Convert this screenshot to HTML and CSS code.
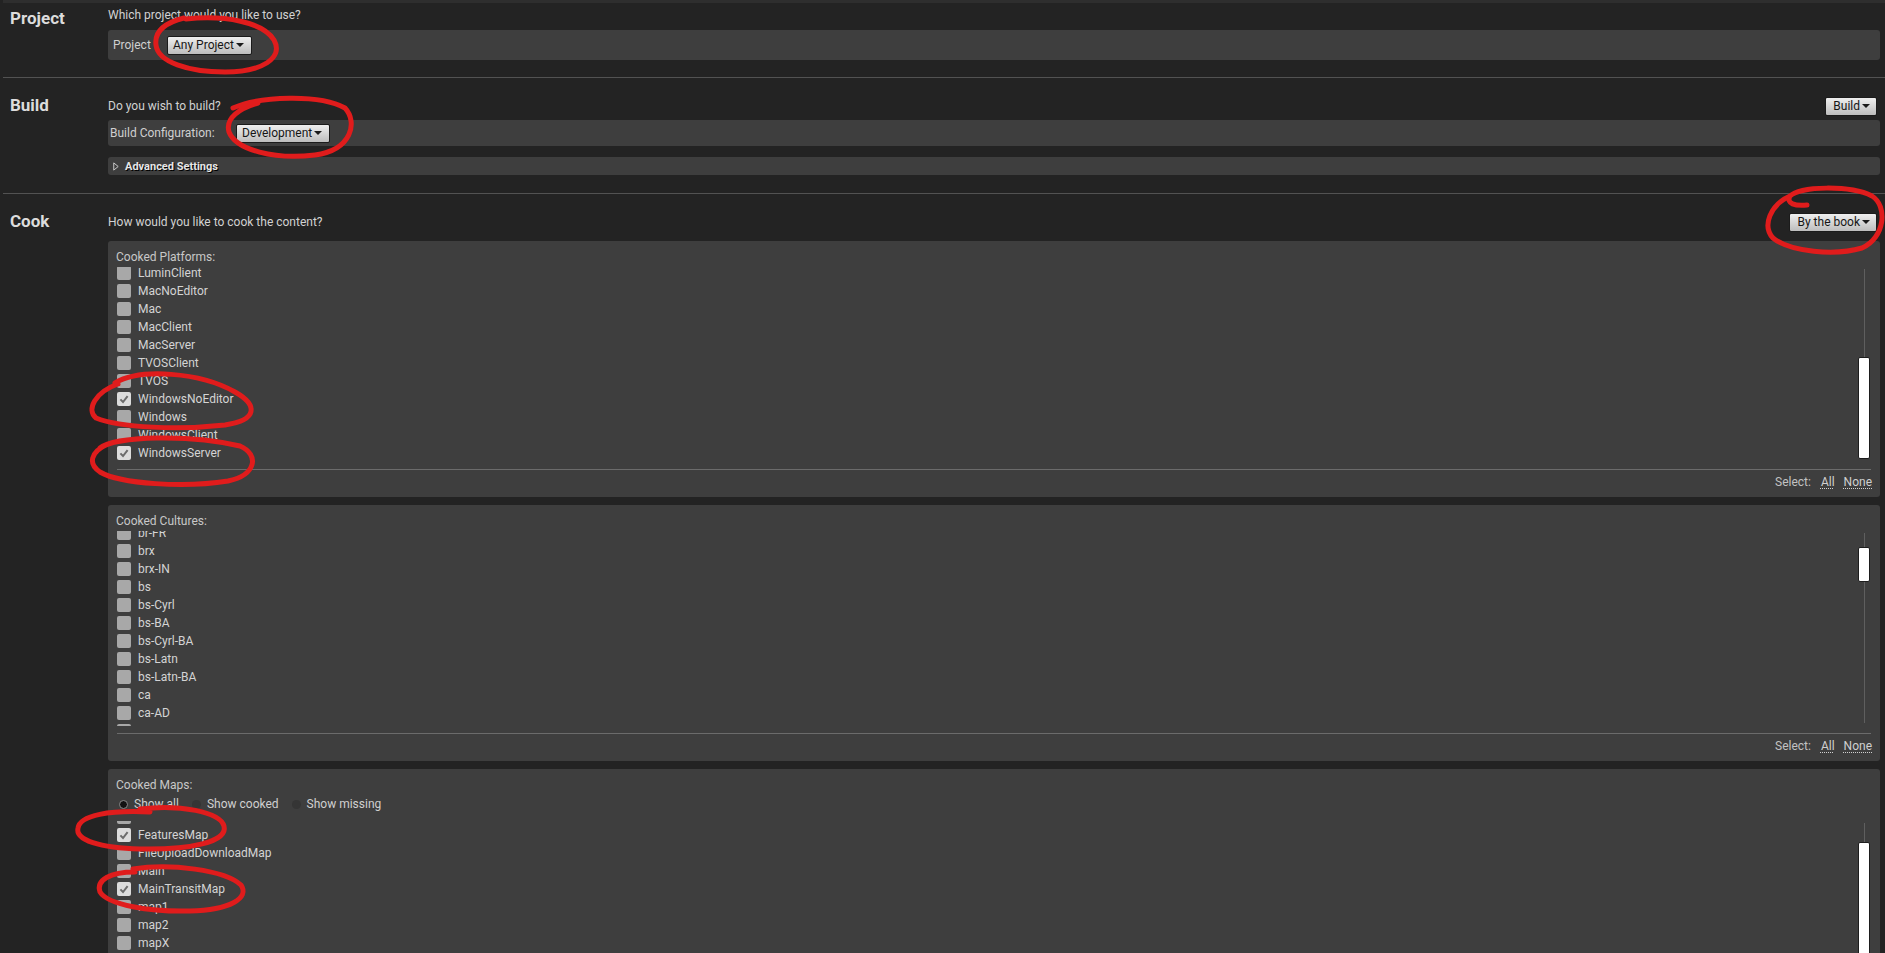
FILE: index.html
```html
<!DOCTYPE html>
<html>
<head>
<meta charset="utf-8">
<title>Project Launcher</title>
<link rel="stylesheet" href="styles.css">
</head>
<body>
<div class="page">
  <div class="topstrip"></div>

  <section class="sec sec-project">
    <h2 class="sec-title title-project">Project</h2>
    <div class="sec-body">
      <div class="sec-head head-project"><span class="q">Which project would you like to use?</span></div>
      <div class="prop-row row-project">
        <span class="prop-label lbl-project">Project</span>
        <span class="combo">Any Project<i class="caret"></i></span>
      </div>
    </div>
  </section>

  <section class="sec sec-build">
    <h2 class="sec-title">Build</h2>
    <div class="sec-body">
      <div class="sec-head">
        <span class="q">Do you wish to build?</span>
        <span class="combo hdr">Build<i class="caret"></i></span>
      </div>
      <div class="prop-row row-build">
        <span class="prop-label lbl-build">Build Configuration:</span>
        <span class="combo">Development<i class="caret"></i></span>
      </div>
      <div class="adv">
        <svg class="adv-tri" width="6" height="9" viewBox="0 0 6 9"><path d="M0.75 0.9 L5.2 4.5 L0.75 8.1 Z" fill="none" stroke="#c8c8c8" stroke-width="1"/></svg>
        <span class="adv-text">Advanced Settings</span>
      </div>
    </div>
  </section>

  <section class="sec sec-cook">
    <h2 class="sec-title">Cook</h2>
    <div class="sec-body">
      <div class="sec-head">
        <span class="q">How would you like to cook the content?</span>
        <span class="combo hdr">By the book<i class="caret"></i></span>
      </div>

      <div class="panel panel-first">
        <div class="panel-label">Cooked Platforms:</div>
        <div class="list-wrap">
          <div class="list">
            <div class="list-inner inner-platforms">
              <div class="item"><span class="cb"></span>LuminClient</div>
              <div class="item"><span class="cb"></span>MacNoEditor</div>
              <div class="item"><span class="cb"></span>Mac</div>
              <div class="item"><span class="cb"></span>MacClient</div>
              <div class="item"><span class="cb"></span>MacServer</div>
              <div class="item"><span class="cb"></span>TVOSClient</div>
              <div class="item"><span class="cb"></span>TVOS</div>
              <div class="item"><span class="cb on"><svg viewBox="0 0 14 14"><path d="M3.4 7.4 L6 10 L10.6 4.2"/></svg></span>WindowsNoEditor</div>
              <div class="item"><span class="cb"></span>Windows</div>
              <div class="item"><span class="cb"></span>WindowsClient</div>
              <div class="item"><span class="cb on"><svg viewBox="0 0 14 14"><path d="M3.4 7.4 L6 10 L10.6 4.2"/></svg></span>WindowsServer</div>
            </div>
          </div>
          <div class="sb"><div class="sb-track"><div class="sb-thumb thumb-platforms"></div></div></div>
        </div>
        <div class="rule"></div>
        <div class="select-row"><span class="sel-label">Select:</span><span class="lnk lnk-all">All</span><span class="lnk lnk-none">None</span></div>
      </div>

      <div class="panel">
        <div class="panel-label">Cooked Cultures:</div>
        <div class="list-wrap wrap-cultures">
          <div class="list">
            <div class="list-inner inner-cultures">
              <div class="item"><span class="cb"></span>br-FR</div>
              <div class="item"><span class="cb"></span>brx</div>
              <div class="item"><span class="cb"></span>brx-IN</div>
              <div class="item"><span class="cb"></span>bs</div>
              <div class="item"><span class="cb"></span>bs-Cyrl</div>
              <div class="item"><span class="cb"></span>bs-BA</div>
              <div class="item"><span class="cb"></span>bs-Cyrl-BA</div>
              <div class="item"><span class="cb"></span>bs-Latn</div>
              <div class="item"><span class="cb"></span>bs-Latn-BA</div>
              <div class="item"><span class="cb"></span>ca</div>
              <div class="item"><span class="cb"></span>ca-AD</div>
              <div class="item"><span class="cb"></span>ca-ES</div>
            </div>
          </div>
          <div class="sb"><div class="sb-track"><div class="sb-thumb thumb-cultures"></div></div></div>
        </div>
        <div class="rule rule-cultures"></div>
        <div class="select-row"><span class="sel-label">Select:</span><span class="lnk lnk-all">All</span><span class="lnk lnk-none">None</span></div>
      </div>

      <div class="panel">
        <div class="panel-label">Cooked Maps:</div>
        <div class="radios">
          <span class="radio"><i class="dot sel"></i>Show all</span>
          <span class="radio"><i class="dot"></i>Show cooked</span>
          <span class="radio"><i class="dot"></i>Show missing</span>
        </div>
        <div class="list-wrap maps-wrap">
          <div class="list">
            <div class="list-inner inner-maps">
              <div class="item"><span class="cb"></span>Default</div>
              <div class="item"><span class="cb on"><svg viewBox="0 0 14 14"><path d="M3.4 7.4 L6 10 L10.6 4.2"/></svg></span>FeaturesMap</div>
              <div class="item"><span class="cb"></span>FileUploadDownloadMap</div>
              <div class="item"><span class="cb"></span>Main</div>
              <div class="item"><span class="cb on"><svg viewBox="0 0 14 14"><path d="M3.4 7.4 L6 10 L10.6 4.2"/></svg></span>MainTransitMap</div>
              <div class="item"><span class="cb"></span>map1</div>
              <div class="item"><span class="cb"></span>map2</div>
              <div class="item"><span class="cb"></span>mapX</div>
              <div class="item"><span class="cb"></span>Minimal</div>
            </div>
          </div>
          <div class="sb"><div class="sb-track track-maps"><div class="sb-thumb thumb-maps"></div></div></div>
        </div>
      </div>
    </div>
  </section>

  <svg class="marks" width="1885" height="953" viewBox="0 0 1885 953">
    <path d="M186 19 C225 15, 263 22, 274 40 C284 58, 262 72, 225 72 C188 72, 158 62, 156 45 C154 30, 168 22, 184 18"/>
    <path d="M233 108 C260 96, 320 94, 345 108 C358 122, 352 150, 315 155 C275 160, 236 150, 229 132 C225 118, 240 108, 258 103"/>
    <path d="M1807 205 C1795 206, 1786 204, 1790 196 C1800 186, 1850 185, 1872 196 C1888 206, 1885 238, 1862 248 C1835 256, 1790 252, 1773 238 C1762 226, 1770 205, 1790 196"/>
    <path d="M115 383 C140 368, 200 372, 235 392 C258 405, 258 420, 225 425 C180 430, 120 428, 96 418 C86 410, 95 392, 118 384"/>
    <path d="M100 448 C115 436, 190 434, 240 446 C260 455, 256 475, 228 481 C185 488, 120 484, 100 472 C88 464, 90 452, 108 444"/>
    <path d="M140 809 C180 804, 220 812, 224 826 C228 842, 190 850, 140 849 C100 848, 75 840, 78 828 C80 815, 110 810, 150 812"/>
    <path d="M133 869 C170 863, 225 870, 241 885 C250 898, 230 910, 190 911 C150 912, 108 905, 100 892 C96 880, 110 872, 135 872"/>
  </svg>
</div>
</body>
</html>
```

FILE: styles.css
```css
html, body {
  margin: 0;
  height: 100%;
  overflow: hidden;
}
body {
  background: #232323;
  font-family: Roboto, "Noto Sans", "Liberation Sans", sans-serif;
  font-size: 12px;
  color: #cecece;
}
.page {
  position: relative;
  width: 1885px;
  height: 953px;
  overflow: hidden;
}
.topstrip {
  height: 3px;
  margin-left: 3px;
  background: #2e2e2e;
}

/* sections */
.sec {
  display: flex;
  margin-left: 3px;
  padding: 18px 5px 18px 0;
  border-bottom: 1px solid #525252;
}
.sec-project {
  padding-top: 5px;
  padding-bottom: 17px;
}
.sec-cook {
  border-bottom: none;
  padding-bottom: 0;
}
.sec-title {
  flex: none;
  width: 105px;
  padding-left: 7px;
  box-sizing: border-box;
  margin: -1px 0 0 0;
  font-size: 17px;
  font-weight: 700;
  line-height: 20px;
  color: #dcdcdc;
}
.title-project {
  margin-top: 0;
}
.sec-body {
  flex: 1;
  min-width: 0;
}
.sec-head {
  display: flex;
  align-items: center;
  justify-content: space-between;
  height: 20px;
}
.head-project {
  height: 14px;
}
.q {
  line-height: 14px;
  color: #d2d2d2;
}

/* property rows */
.prop-row {
  display: flex;
  align-items: center;
  background: #3e3e3e;
  border-radius: 3px;
}
.row-project {
  height: 30px;
  margin-top: 8px;
  padding-left: 5px;
}
.row-build {
  height: 26px;
  margin-top: 4px;
  padding-left: 2px;
}
.prop-label {
  flex: none;
  color: #d0d0d0;
}
.lbl-project {
  width: 54px;
}
.lbl-build {
  width: 126px;
}

/* combo buttons */
.combo {
  display: inline-flex;
  align-items: center;
  height: 19px;
  box-sizing: border-box;
  padding: 0 7px 0 5px;
  border: 1px solid #1b1b1b;
  border-radius: 2px;
  background: linear-gradient(#efefef, #bdbdbd);
  color: #161616;
  font-size: 12px;
  line-height: 17px;
  white-space: nowrap;
}
.combo.hdr {
  padding: 0 6px 0 7px;
  margin-right: 3px;
}
.caret {
  width: 0;
  height: 0;
  margin-left: 2px;
  border-left: 4px solid transparent;
  border-right: 4px solid transparent;
  border-top: 4px solid #1a1a1a;
}

/* advanced settings */
.adv {
  display: flex;
  align-items: center;
  height: 18px;
  margin-top: 11px;
  padding-left: 5px;
  background: #3e3e3e;
  border-radius: 3px;
}
.adv-tri {
  flex: none;
  margin-right: 6px;
}
.adv-text {
  font-size: 11px;
  font-weight: 700;
  color: #e6e6e6;
  text-shadow: 1px 1px 0 #000;
}

/* panels */
.panel {
  margin-top: 8px;
  padding: 9px 9px 7px 8px;
  background: #3e3e3e;
  border-radius: 3px;
}
.panel-first {
  margin-top: 9px;
}
.panel-label {
  height: 15px;
  line-height: 15px;
  color: #c8c8c8;
}
.list-wrap {
  display: flex;
  height: 196px;
  margin-top: 2px;
}
.wrap-cultures {
  height: 195px;
}
.maps-wrap {
  margin-top: 9px;
}
.list {
  flex: 1;
  overflow: hidden;
}
.inner-platforms {
  margin-top: -3px;
}
.inner-cultures {
  margin-top: -7px;
}
.inner-maps {
  margin-top: -13px;
}
.item {
  display: flex;
  align-items: center;
  height: 18px;
  padding-left: 1px;
  color: #d4d4d4;
  white-space: nowrap;
}
.cb {
  flex: none;
  width: 14px;
  height: 14px;
  margin-right: 7px;
  border-radius: 2px;
  background: #a8a8a8;
}
.cb.on {
  background: #dcdcdc;
}
.cb svg {
  display: block;
  width: 14px;
  height: 14px;
  fill: none;
  stroke: #6c6c6c;
  stroke-width: 2;
}

/* scrollbars */
.sb {
  flex: none;
  width: 12px;
  margin-right: 1px;
}
.sb-track {
  display: flex;
  flex-direction: column;
  margin-top: 2px;
  height: 190px;
  background: linear-gradient(#5f5f5f, #5f5f5f) center / 1px 100% no-repeat;
}
.track-maps {
  height: 260px;
}
.sb-thumb {
  flex: none;
  box-sizing: border-box;
  width: 12px;
  background: #ffffff;
  border: 1px solid #1d1d1d;
  border-radius: 2px;
}
.thumb-platforms {
  margin-top: 88px;
  height: 102px;
}
.thumb-cultures {
  margin-top: 14px;
  height: 35px;
}
.thumb-maps {
  margin-top: 19px;
  height: 220px;
}

.rule {
  height: 1px;
  margin: 6px 0 0 1px;
  background: #6b6b6b;
}
.rule-cultures {
  margin-top: 7px;
}
.select-row {
  display: flex;
  justify-content: flex-end;
  align-items: center;
  height: 16px;
  margin-top: 4px;
  color: #c2c2c2;
}
.lnk {
  color: #d0d0d0;
  text-decoration: underline dotted #d0d0d0;
  text-underline-offset: 2px;
}
.lnk-all {
  margin-left: 10px;
}
.lnk-none {
  margin-left: 9px;
  margin-right: -1px;
}

/* radios */
.radios {
  display: flex;
  align-items: center;
  height: 16px;
  margin-top: 3px;
  padding-left: 3px;
  color: #d0d0d0;
}
.radio {
  display: flex;
  align-items: center;
  margin-right: 13px;
}
.dot {
  width: 9px;
  height: 9px;
  margin-right: 6px;
  border-radius: 50%;
  background: #353535;
  box-sizing: border-box;
}
.dot.sel {
  background: #121212;
  border: 1px solid #8a8a8a;
}

/* annotation overlay */
.marks {
  position: absolute;
  left: 0;
  top: 0;
  pointer-events: none;
}
.marks path {
  fill: none;
  stroke: #e01c1c;
  stroke-width: 5;
  stroke-linecap: round;
  stroke-linejoin: round;
}
```
